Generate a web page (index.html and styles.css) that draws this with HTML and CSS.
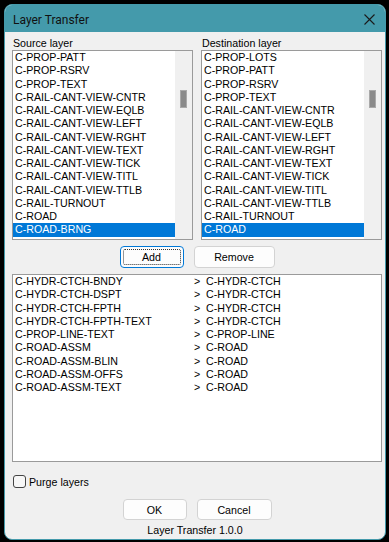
FILE: index.html
```html
<!DOCTYPE html>
<html>
<head>
<meta charset="utf-8">
<link rel="stylesheet" href="styles.css">
</head>
<body>
<div class="window">
  <div class="titlebar">
    <span class="title">Layer Transfer</span>
    <svg class="close" width="11" height="11" viewBox="0 0 11 11"><path d="M0.5 0.5 L10.5 10.5 M10.5 0.5 L0.5 10.5" stroke="#1a1a1a" stroke-width="1.1" fill="none"/></svg>
  </div>
  <div class="content">
    <div class="panes">
      <div class="pane">
        <div class="label">Source layer</div>
        <div class="listbox">
          <div class="items">
            <div class="item">C-PROP-PATT</div>
            <div class="item">C-PROP-RSRV</div>
            <div class="item">C-PROP-TEXT</div>
            <div class="item">C-RAIL-CANT-VIEW-CNTR</div>
            <div class="item">C-RAIL-CANT-VIEW-EQLB</div>
            <div class="item">C-RAIL-CANT-VIEW-LEFT</div>
            <div class="item">C-RAIL-CANT-VIEW-RGHT</div>
            <div class="item">C-RAIL-CANT-VIEW-TEXT</div>
            <div class="item">C-RAIL-CANT-VIEW-TICK</div>
            <div class="item">C-RAIL-CANT-VIEW-TITL</div>
            <div class="item">C-RAIL-CANT-VIEW-TTLB</div>
            <div class="item">C-RAIL-TURNOUT</div>
            <div class="item">C-ROAD</div>
            <div class="item selected">C-ROAD-BRNG</div>
          </div>
          <div class="scrollbar"><div class="thumb"></div></div>
        </div>
      </div>
      <div class="pane">
        <div class="label">Destination layer</div>
        <div class="listbox">
          <div class="items">
            <div class="item">C-PROP-LOTS</div>
            <div class="item">C-PROP-PATT</div>
            <div class="item">C-PROP-RSRV</div>
            <div class="item">C-PROP-TEXT</div>
            <div class="item">C-RAIL-CANT-VIEW-CNTR</div>
            <div class="item">C-RAIL-CANT-VIEW-EQLB</div>
            <div class="item">C-RAIL-CANT-VIEW-LEFT</div>
            <div class="item">C-RAIL-CANT-VIEW-RGHT</div>
            <div class="item">C-RAIL-CANT-VIEW-TEXT</div>
            <div class="item">C-RAIL-CANT-VIEW-TICK</div>
            <div class="item">C-RAIL-CANT-VIEW-TITL</div>
            <div class="item">C-RAIL-CANT-VIEW-TTLB</div>
            <div class="item">C-RAIL-TURNOUT</div>
            <div class="item selected">C-ROAD</div>
          </div>
          <div class="scrollbar"><div class="thumb"></div></div>
        </div>
      </div>
    </div>
    <div class="btnrow">
      <button class="btn btn-add focused"><span class="focusring">Add</span></button>
      <button class="btn btn-remove">Remove</button>
    </div>
    <div class="maplist">
      <div class="map"><span>C-HYDR-CTCH-BNDY</span><span>&gt;</span><span>C-HYDR-CTCH</span></div>
      <div class="map"><span>C-HYDR-CTCH-DSPT</span><span>&gt;</span><span>C-HYDR-CTCH</span></div>
      <div class="map"><span>C-HYDR-CTCH-FPTH</span><span>&gt;</span><span>C-HYDR-CTCH</span></div>
      <div class="map"><span>C-HYDR-CTCH-FPTH-TEXT</span><span>&gt;</span><span>C-HYDR-CTCH</span></div>
      <div class="map"><span>C-PROP-LINE-TEXT</span><span>&gt;</span><span>C-PROP-LINE</span></div>
      <div class="map"><span>C-ROAD-ASSM</span><span>&gt;</span><span>C-ROAD</span></div>
      <div class="map"><span>C-ROAD-ASSM-BLIN</span><span>&gt;</span><span>C-ROAD</span></div>
      <div class="map"><span>C-ROAD-ASSM-OFFS</span><span>&gt;</span><span>C-ROAD</span></div>
      <div class="map"><span>C-ROAD-ASSM-TEXT</span><span>&gt;</span><span>C-ROAD</span></div>
    </div>
    <label class="check">
      <span class="box"></span>
      <span>Purge layers</span>
    </label>
    <div class="btnrow okrow">
      <button class="btn btn-ok">OK</button>
      <button class="btn btn-cancel">Cancel</button>
    </div>
    <div class="footer">Layer Transfer 1.0.0</div>
  </div>
</div>
</body>
</html>
```
FILE: styles.css
```css
* { box-sizing: border-box; }
html, body {
  margin: 0;
  padding: 0;
  background: #000;
}
body {
  font-family: "Liberation Sans", Arial, sans-serif;
  font-size: 10.67px;
  color: #000;
}
.window {
  width: 382px;
  height: 536px;
  margin: 4px 0 0 4px;
  border: 1px solid #449aab;
  border-radius: 8px;
  overflow: hidden;
  background: #f0f0f0;
  display: flex;
  flex-direction: column;
}
.titlebar {
  height: 27px;
  flex: none;
  background: #449aab;
  display: flex;
  align-items: center;
  justify-content: space-between;
  padding: 2px 10px 0 8px;
}
.title {
  font-family: Roboto, "Liberation Sans", sans-serif;
  font-size: 12px;
  color: #111;
}
.close { display: block; margin-top: -1px; }
.content {
  padding: 0 3px 0 7px;
  display: flex;
  flex-direction: column;
}
.panes {
  display: grid;
  grid-template-columns: 181px 181px;
  column-gap: 8px;
}
.label {
  height: 18px;
  padding-top: 5px;
  line-height: 13px;
  padding-left: 1px;
}
.listbox {
  height: 190px;
  border: 1px solid #9a9a9a;
  background: #fff;
  display: flex;
}
.items {
  flex: 1;
  min-width: 0;
}
.item {
  height: 13.25px;
  line-height: 13.25px;
  padding-left: 2px;
  white-space: nowrap;
}
.item.selected {
  background: #0078d7;
  color: #fff;
}
.scrollbar {
  width: 17px;
  flex: none;
  background: #f0f0f0;
  padding: 39px 0 0 5px;
}
.thumb {
  width: 7px;
  height: 18px;
  background: #8a8a8a;
  border: 1px solid #a9a9a9;
}
.btnrow {
  display: flex;
  justify-content: center;
  gap: 10px;
  margin-top: 6px;
}
.btn {
  height: 22px;
  border: 1px solid #d3d3d3;
  border-radius: 4px;
  background: #fdfdfd;
  font-family: "Liberation Sans", Arial, sans-serif;
  font-size: 10.67px;
  color: #000;
  padding: 0;
}
.btn-add {
  width: 64px;
  border-color: #0078d7;
  padding: 2px;
}
.focusring {
  display: flex;
  align-items: center;
  justify-content: center;
  width: 100%;
  height: 100%;
  border: 1px dotted #333;
  border-radius: 2px;
}
.btn-remove { width: 81px; }
.maplist {
  margin-top: 6px;
  height: 188px;
  border: 1px solid #9a9a9a;
  background: #fff;
  padding-left: 2px;
}
.map {
  display: grid;
  grid-template-columns: 179px 12px auto;
  height: 13.25px;
  line-height: 13.25px;
  white-space: nowrap;
}
.check {
  display: flex;
  align-items: center;
  gap: 3px;
  margin-top: 13px;
  margin-left: 1px;
  height: 13px;
}
.box {
  width: 13px;
  height: 13px;
  border: 1px solid #444;
  border-radius: 3px;
  background: #f7f7f7;
}
.okrow { margin-top: 11px; }
.okrow .btn { height: 21px; }
.btn-ok { width: 64px; }
.btn-cancel { width: 75px; }
.footer {
  margin-top: 4px;
  text-align: center;
  line-height: 13px;
  padding-right: 4px;
}
```
